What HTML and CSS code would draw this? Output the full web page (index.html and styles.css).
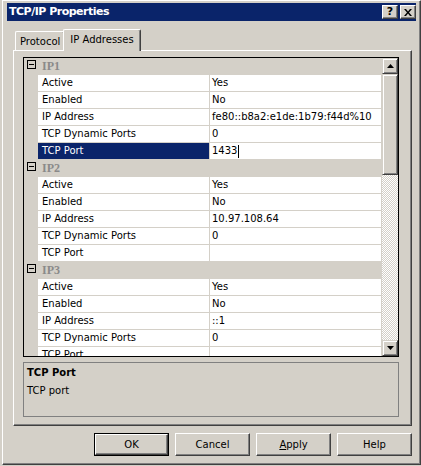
FILE: index.html
```html
<!DOCTYPE html>
<html>
<head>
<meta charset="utf-8">
<link rel="stylesheet" href="styles.css">
</head>
<body>
<div class="window">
  <div class="titlebar">
    <span class="title">TCP/IP Properties</span>
    <div class="tbtns">
      <span class="tbtn help">?</span>
      <span class="tbtn close"><svg width="8" height="7" viewBox="0 0 8 7"><path d="M0 0h2l2 2.5L6 0h2L5 3.5 8 7H6L4 4.5 2 7H0l3-3.5z" fill="#000"/></svg></span>
    </div>
  </div>
  <div class="tabs">
    <div class="tab">Protocol</div>
    <div class="tab active">IP Addresses</div>
  </div>
  <div class="panel">
    <div class="grid">
      <div class="rows">
        <div class="cat"><span class="box"></span><span class="cat-name">IP1</span></div>
        <div class="row"><span class="gut"></span><span class="lbl">Active</span><span class="val">Yes</span></div>
        <div class="row"><span class="gut"></span><span class="lbl">Enabled</span><span class="val">No</span></div>
        <div class="row"><span class="gut"></span><span class="lbl">IP Address</span><span class="val">fe80::b8a2:e1de:1b79:f44d%10</span></div>
        <div class="row"><span class="gut"></span><span class="lbl">TCP Dynamic Ports</span><span class="val">0</span></div>
        <div class="row sel"><span class="gut"></span><span class="lbl">TCP Port</span><span class="val">1433<span class="caret"></span></span></div>
        <div class="cat"><span class="box"></span><span class="cat-name">IP2</span></div>
        <div class="row"><span class="gut"></span><span class="lbl">Active</span><span class="val">Yes</span></div>
        <div class="row"><span class="gut"></span><span class="lbl">Enabled</span><span class="val">No</span></div>
        <div class="row"><span class="gut"></span><span class="lbl">IP Address</span><span class="val">10.97.108.64</span></div>
        <div class="row"><span class="gut"></span><span class="lbl">TCP Dynamic Ports</span><span class="val">0</span></div>
        <div class="row"><span class="gut"></span><span class="lbl">TCP Port</span><span class="val"></span></div>
        <div class="cat"><span class="box"></span><span class="cat-name">IP3</span></div>
        <div class="row"><span class="gut"></span><span class="lbl">Active</span><span class="val">Yes</span></div>
        <div class="row"><span class="gut"></span><span class="lbl">Enabled</span><span class="val">No</span></div>
        <div class="row"><span class="gut"></span><span class="lbl">IP Address</span><span class="val">::1</span></div>
        <div class="row"><span class="gut"></span><span class="lbl">TCP Dynamic Ports</span><span class="val">0</span></div>
        <div class="row"><span class="gut"></span><span class="lbl">TCP Port</span><span class="val"></span></div>
      </div>
      <div class="scrollbar">
        <span class="sbtn"><svg width="7" height="4" viewBox="0 0 7 4"><path d="M3.5 0L7 4H0z" fill="#000"/></svg></span>
        <span class="thumb"></span>
        <span class="track"></span>
        <span class="sbtn"><svg width="7" height="4" viewBox="0 0 7 4"><path d="M0 0h7L3.5 4z" fill="#000"/></svg></span>
      </div>
    </div>
    <div class="desc">
      <div class="desc-title">TCP Port</div>
      <div class="desc-text">TCP port</div>
    </div>
  </div>
  <div class="buttons">
    <span class="btn default"><span class="btn-in">OK</span></span>
    <span class="btn"><span class="btn-in">Cancel</span></span>
    <span class="btn"><span class="btn-in"><u>A</u>pply</span></span>
    <span class="btn"><span class="btn-in">Help</span></span>
  </div>
</div>
</body>
</html>
```
FILE: styles.css
```css
html, body {
  margin: 0;
  padding: 0;
  background: #d4d0c8;
  font-family: "DejaVu Sans", "Liberation Sans", sans-serif;
  font-size: 10px;
  color: #000;
}

.window {
  box-sizing: border-box;
  width: 419px;
  height: 465px;
  margin-left: 2px;
  border: 1px solid;
  border-color: #fff #404040 #404040 #fff;
  box-shadow: inset -1px -1px #808080;
  padding: 2px 4px 3px 4px;
  display: flex;
  flex-direction: column;
}

.titlebar {
  height: 18px;
  background: #0a246a;
  display: flex;
  align-items: flex-start;
  justify-content: space-between;
  flex-shrink: 0;
}

.title {
  color: #fff;
  font-weight: bold;
  font-size: 11px;
  letter-spacing: -0.5px;
  line-height: 18px;
  padding-left: 2px;
}

.tbtns {
  display: flex;
  gap: 2px;
  margin-top: 2px;
  margin-right: 0;
}

.tbtn {
  box-sizing: border-box;
  width: 16px;
  height: 14px;
  background: #d4d0c8;
  border: 1px solid;
  border-color: #fff #404040 #404040 #fff;
  box-shadow: inset -1px -1px #808080;
  display: flex;
  align-items: center;
  justify-content: center;
  font-weight: bold;
  font-size: 11px;
  line-height: 12px;
}

.tbtn.close svg {
  margin-right: 1px;
}

.tabs {
  height: 29px;
  display: flex;
  align-items: flex-end;
  padding-left: 8px;
  flex-shrink: 0;
}

.tab {
  box-sizing: border-box;
  height: 19px;
  padding: 0 4px;
  border-left: 1px solid #fff;
  border-top: 1px solid #fff;
  border-right: 1px solid #404040;
  box-shadow: inset -1px 0 #808080;
  border-radius: 2px 2px 0 0;
  line-height: 19px;
  background: #d4d0c8;
}

.tab.active {
  height: 22px;
  margin: 0 -2px -1px -2px;
  padding: 0 6px;
  line-height: 19px;
  position: relative;
  z-index: 1;
}

.panel {
  box-sizing: border-box;
  height: 376px;
  margin: 0 4px 0 6px;
  border: 1px solid;
  border-color: #fff #404040 #404040 #fff;
  box-shadow: inset -1px -1px #808080;
  padding: 6px 12px 8px 9px;
  display: flex;
  flex-direction: column;
  gap: 5px;
  flex-shrink: 0;
}

.grid {
  box-sizing: border-box;
  height: 300px;
  border: 1px solid #000;
  display: flex;
  overflow: hidden;
  background: #d4d0c8;
}

.rows {
  flex: 1;
  overflow: hidden;
}

.cat {
  height: 17px;
  display: flex;
  align-items: center;
  padding-left: 3px;
  background: #d4d0c8;
}

.box {
  box-sizing: border-box;
  width: 9px;
  height: 9px;
  border: 1px solid #000;
  background: #d4d0c8;
  position: relative;
  margin-top: -4px;
}

.box::after {
  content: "";
  position: absolute;
  left: 1px;
  top: 3px;
  width: 5px;
  height: 1px;
  background: #000;
}

.cat-name {
  margin-left: 6px;
  font-family: "Liberation Serif", "DejaVu Serif", serif;
  font-weight: bold;
  font-size: 12px;
  color: #8a8a8a;
  line-height: 16px;
  margin-top: -2px;
}

.row {
  height: 17px;
  display: flex;
}

.gut {
  width: 14px;
  flex-shrink: 0;
}

.lbl, .val {
  box-sizing: border-box;
  height: 16px;
  line-height: 16px;
  background: #fff;
  white-space: nowrap;
  overflow: hidden;
}

.lbl {
  width: 171px;
  padding-left: 4px;
  margin-right: 1px;
}

.val {
  width: 171px;
  padding-left: 2px;
  display: flex;
  align-items: center;
}

.row.sel .lbl {
  background: #0a246a;
  color: #fff;
}

.caret {
  display: inline-block;
  width: 1px;
  height: 13px;
  background: #000;
  margin-left: 1px;
}

.scrollbar {
  width: 16px;
  display: flex;
  flex-direction: column;
  flex-shrink: 0;
}

.sbtn, .thumb {
  box-sizing: border-box;
  background: #d4d0c8;
  border: 1px solid;
  border-color: #d4d0c8 #404040 #404040 #d4d0c8;
  box-shadow: inset 1px 1px #fff, inset -1px -1px #808080;
}

.sbtn {
  height: 16px;
  display: flex;
  align-items: center;
  justify-content: center;
}

.thumb {
  height: 101px;
}

.track {
  flex: 1;
  background-image: conic-gradient(#fff 25%, #d4d0c8 0 50%, #fff 0 75%, #d4d0c8 0);
  background-size: 2px 2px;
}

.desc {
  box-sizing: border-box;
  height: 55px;
  border: 1px solid #808080;
  padding: 2px 3px;
}

.desc-title {
  font-weight: bold;
  line-height: 16px;
}

.desc-text {
  line-height: 16px;
  margin-top: 2px;
}

.buttons {
  display: flex;
  justify-content: flex-end;
  gap: 6px;
  margin-top: 7px;
  padding-right: 4px;
}

.btn {
  box-sizing: border-box;
  width: 75px;
  height: 23px;
  background: #d4d0c8;
  border: 1px solid;
  border-color: #fff #404040 #404040 #fff;
  box-shadow: inset -1px -1px #808080;
  display: flex;
}

.btn-in {
  flex: 1;
  display: flex;
  align-items: center;
  justify-content: center;
  line-height: 16px;
}

.btn.default {
  border: 1px solid #000;
  box-shadow: none;
}

.btn.default .btn-in {
  border: 1px solid;
  border-color: #fff #404040 #404040 #fff;
  box-shadow: inset -1px -1px #808080;
}
```
